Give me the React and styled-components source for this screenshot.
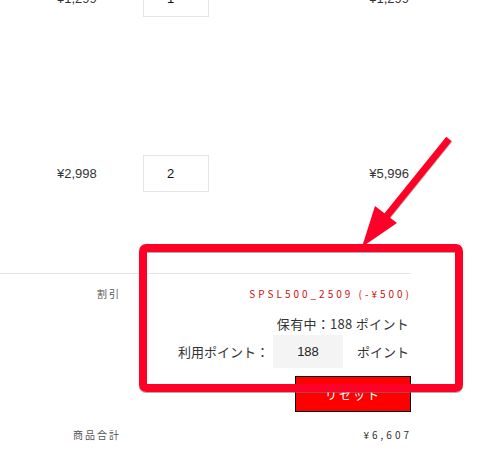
import React from 'react'
import styled, { createGlobalStyle } from 'styled-components'

const GlobalStyle = createGlobalStyle`
  html, body {
    margin: 0;
    padding: 0;
    background: #fff;
  }
  body {
    width: 496px;
    height: 452px;
    overflow: hidden;
    font-family: "Liberation Sans", "Noto Sans CJK JP", sans-serif;
    color: #333;
  }
`

const Page = styled.div`
  width: 411px;
  margin-top: -20px;
`

const ItemList = styled.div`
  display: flex;
  flex-direction: column;
  gap: 138px;
  padding-bottom: 81px;
  border-bottom: 1px solid #e5e5e5;
`

const ItemRow = styled.div`
  display: flex;
  align-items: center;
  height: 37px;
`

const UnitPrice = styled.div`
  width: 86px;
  padding-left: 57px;
  font-size: 13px;
  color: #333;
`

const QtyInput = styled.input`
  box-sizing: border-box;
  width: 66px;
  height: 37px;
  border: 1px solid #e5e5e2;
  padding: 0 0 0 23px;
  font-family: "Liberation Sans", sans-serif;
  font-size: 13px;
  color: #111;
  background: #fff;
  outline: none;
`

const LineTotal = styled.div`
  flex: 1;
  text-align: right;
  padding-right: 2px;
  font-size: 13px;
  color: #333;
`

const Summary = styled.div`
  display: flex;
  flex-direction: column;
  padding-top: 10px;
`

const SummaryRow = styled.div`
  display: flex;
  align-items: center;
  margin-top: ${p => p.$gap || 0}px;
`

const Label = styled.div`
  width: 121px;
  text-align: right;
  font-family: "Noto Sans CJK JP", sans-serif;
  font-size: 10px;
  letter-spacing: 2px;
  color: #555;
  line-height: 20px;
`

const Value = styled.div`
  flex: 1;
  display: flex;
  justify-content: flex-end;
  align-items: center;
  line-height: 20px;
  font-family: "Noto Sans CJK JP", sans-serif;
  font-size: ${p => p.$size || 13}px;
  letter-spacing: ${p => p.$spacing || 0}px;
  color: ${p => p.$color || '#333'};
  margin-right: ${p => p.$trim || 0}px;
`

const PointInput = styled.input`
  box-sizing: border-box;
  width: 70px;
  height: 33px;
  margin: 0 14px 0 4px;
  border: none;
  background: #f4f4f4;
  text-align: center;
  font-family: "Liberation Sans", sans-serif;
  font-size: 13px;
  letter-spacing: 0;
  color: #222;
  outline: none;
`

const ResetButton = styled.button`
  box-sizing: border-box;
  width: 116px;
  height: 36px;
  background: #ff0000;
  border: 1px solid #000;
  color: #fff;
  font-family: "Noto Sans CJK JP", sans-serif;
  font-size: 12px;
  letter-spacing: 2px;
  padding: 0;
`

const Overlay = styled.svg`
  position: fixed;
  left: 0;
  top: 0;
  width: 496px;
  height: 452px;
  pointer-events: none;
`

function Annotation() {
  return (
    <Overlay viewBox="0 0 496 452">
      <defs>
        <filter id="shade" x="-5%" y="-5%" width="110%" height="115%">
          <feDropShadow dx="0" dy="1" stdDeviation="0.6" floodColor="#777" floodOpacity="0.6" />
        </filter>
      </defs>
      <g filter="url(#shade)" fill="none" stroke="#ff0028">
        <rect x="143" y="248" width="316" height="140" rx="3" strokeWidth="8" />
        <line x1="449" y1="139" x2="382" y2="222" strokeWidth="7" strokeLinecap="butt" />
      </g>
      <polygon points="362,247 375,206 397,223" fill="#ff0028" />
    </Overlay>
  )
}

export default function App() {
  return (
    <>
      <GlobalStyle />
      <Page>
        <ItemList>
          <ItemRow>
            <UnitPrice>¥1,299</UnitPrice>
            <QtyInput defaultValue="1" />
            <LineTotal>¥1,299</LineTotal>
          </ItemRow>
          <ItemRow>
            <UnitPrice>¥2,998</UnitPrice>
            <QtyInput defaultValue="2" />
            <LineTotal>¥5,996</LineTotal>
          </ItemRow>
        </ItemList>
        <Summary>
          <SummaryRow>
            <Label>割引</Label>
            <Value $size={10} $spacing={3} $color="#cc1111" $trim={-1}>SPSL500_2509 (-¥500)</Value>
          </SummaryRow>
          <SummaryRow $gap={10}>
            <Label />
            <Value $spacing={0.3} $trim={2}>保有中：188 ポイント</Value>
          </SummaryRow>
          <SummaryRow $gap={1}>
            <Label />
            <Value $trim={2}>
              利用ポイント：
              <PointInput defaultValue="188" />
              ポイント
            </Value>
          </SummaryRow>
          <SummaryRow $gap={8}>
            <Label />
            <Value>
              <ResetButton>リセット</ResetButton>
            </Value>
          </SummaryRow>
          <SummaryRow $gap={13}>
            <Label>商品合計</Label>
            <Value $size={10} $spacing={3} $trim={-1}>¥6,607</Value>
          </SummaryRow>
        </Summary>
      </Page>
      <Annotation />
    </>
  )
}
